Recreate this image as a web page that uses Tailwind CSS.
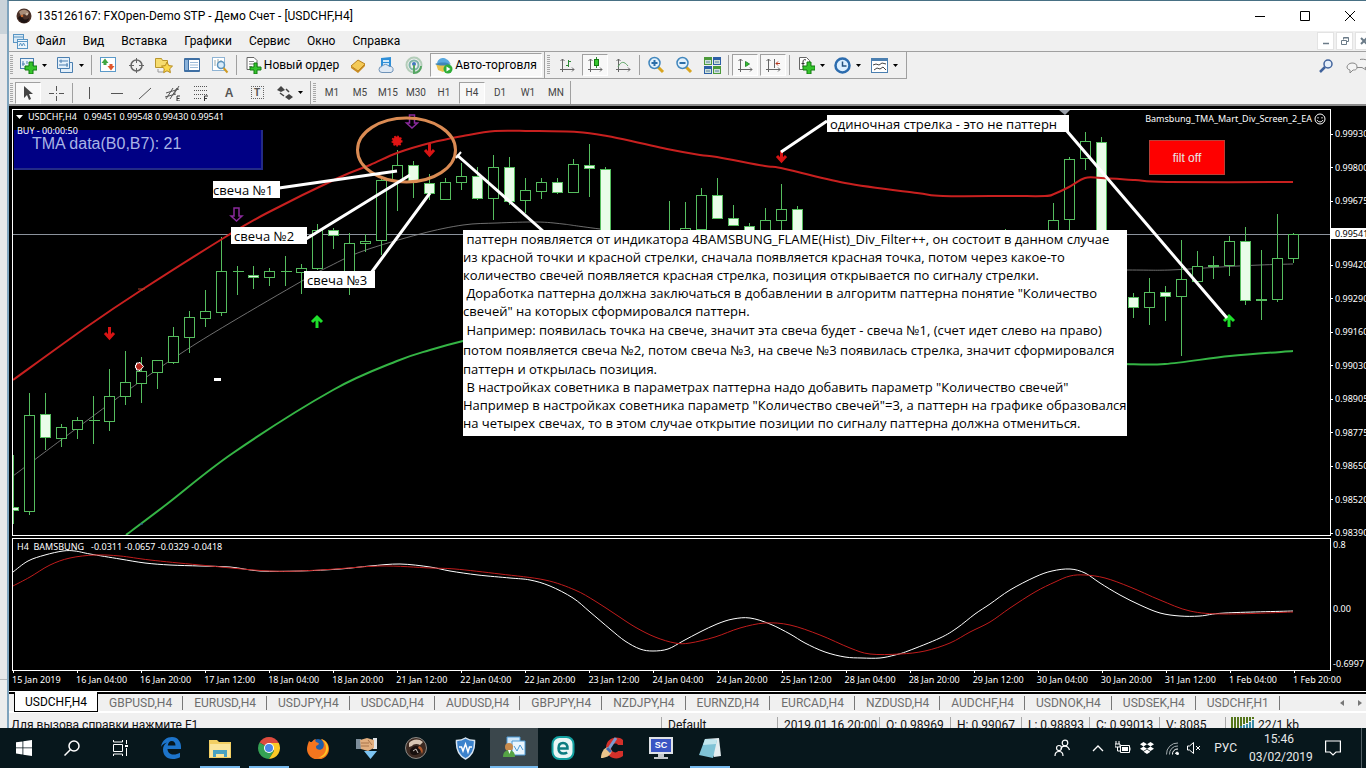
<!DOCTYPE html>
<html lang="ru">
<head>
    <meta charset="UTF-8">
    <meta name="viewport" content="width=device-width, initial-scale=1.0">
    <title>135126167: FXOpen-Demo STP - Демо Счет - [USDCHF,H4]</title>
    <script src="https://cdn.jsdelivr.net/npm/@tailwindcss/browser@4"></script>
</head>
<body class="h-screen flex flex-col overflow-hidden bg-[#e4e6e9] font-['Roboto','Noto_Sans',sans-serif] text-xs text-black">

    <div class="flex flex-1 min-h-0">
        <!-- Edge of the window behind -->
        <div class="w-[7px] flex flex-col">
            <div class="h-[34px] bg-[#c9d3da]"></div>
            <div class="flex-1 border-b border-[#b5b8bb] bg-[#e6e7e9]"></div>
            <div class="h-[48px] bg-[#eceded]"></div>
        </div>

        <div class="flex-1 min-w-0 -mr-[6px] flex flex-col bg-[#f0f0f0] border-t border-t-[#487084] border-l-2 border-l-[#7ea3bd]">

            <!-- Title bar -->
            <header class="h-[30px] bg-white flex items-center pl-[7px]">
                <svg class="size-4" viewBox="0 0 16 16">
                    <circle cx="8" cy="8" r="7.5" fill="#4a3128"/>
                    <path d="M3 4c3-3 8-3 10 1l-2 3-3-2-3 2z" fill="#a88d78"/>
                    <path d="M2 10c2-3 4-2 5 0s3 2 6 0c0 3-3 5-5 5s-5-2-6-5z" fill="#1d1413"/>
                    <circle cx="6" cy="8" r="1.3" fill="#c86a31"/><circle cx="11" cy="6" r="1" fill="#d9c9b8"/>
                </svg>
                <h1 class="ml-[5px] text-xs">135126167: FXOpen-Demo STP - Демо Счет - [USDCHF,H4]</h1>
                <div class="ml-auto flex h-full">
                    <button aria-label="Minimize" class="w-[45px] grid place-items-center"><svg class="size-3" viewBox="0 0 12 12"><path d="M1 6.5h10" stroke="#000"/></svg></button>
                    <button aria-label="Maximize" class="w-[45px] grid place-items-center"><svg class="size-3" viewBox="0 0 12 12"><path d="M1.500 1.500h9v9h-9z" fill="none" stroke="#000"/></svg></button>
                    <button aria-label="Close" class="w-[45px] grid place-items-center"><svg class="size-3" viewBox="0 0 12 12"><path d="M1 1l10 10M11 1L1 11" stroke="#000"/></svg></button>
                </div>
            </header>

            <!-- Menu -->
            <nav class="h-[21px] border-b border-[#a0a0a0] flex items-center pl-1">
                <svg class="size-[15px]" viewBox="0 0 15 15" fill="none" stroke="#5b96c4">
                    <rect x=".5" y=".5" width="10" height="8" fill="#dcebf6"/><path d="M.5 3h10"/>
                    <rect x="4.500" y="5.500" width="10" height="9" fill="#eef6fc"/><path d="M4.500 7.500h10M6 12l1.500-3 1.500 3 1.500-3 1.500 3"/>
                </svg>
                <div class="ml-2 flex gap-[17px]">
                    <a href="#">Файл</a>
                    <a href="#">Вид</a>
                    <a href="#">Вставка</a>
                    <a href="#">Графики</a>
                    <a href="#">Сервис</a>
                    <a href="#">Окно</a>
                    <a href="#">Справка</a>
                </div>
                <div class="ml-auto flex gap-[2px]">
                    <button aria-label="Minimize chart" class="w-[17px] h-[18px] bg-white border border-[#e3e3e3] grid place-items-center"><svg class="size-2" viewBox="0 0 8 8"><path d="M1 6.500h6" stroke="#6b7b88" stroke-width="1.500"/></svg></button>
                    <button aria-label="Restore chart" class="w-[17px] h-[18px] bg-white border border-[#e3e3e3] grid place-items-center"><svg class="size-2" viewBox="0 0 8 8" fill="none" stroke="#6b7b88"><path d="M2.500 2.500v-2h5v4h-2M.5 3.500h5v4h-5zM2.500 1h5"/></svg></button>
                    <button aria-label="Close chart" class="w-[17px] h-[18px] bg-white border border-[#e3e3e3] grid place-items-center"><svg class="size-2" viewBox="0 0 8 8"><path d="M1 1l6 6M7 1L1 7" stroke="#6b7b88" stroke-width="2"/></svg></button>
                </div>
            </nav>

            <!-- Standard toolbar -->
            <div class="h-[27px] flex items-center pl-px">
                <div class="w-[897px] h-full flex items-center border-b border-r border-[#a0a0a0]">
                    <div class="w-[3px] h-5 mr-px bg-[repeating-linear-gradient(#a8a8a8_0_1px,transparent_1px_2px)]"></div>
                    <button aria-label="New chart" class="w-[37px] h-6 flex items-center justify-center gap-[5px]">
                        <svg class="size-[18px]" viewBox="0 0 18 18"><rect x="1.500" y="2.500" width="13" height="10" fill="#eaf3fb" stroke="#4b7fb0"/><path d="M4 5v5M3 8h3M8 5v3" stroke="#4b7fb0"/><path d="M10 6h4v4h4v4h-4v4h-4v-4H6v-4h4z" fill="#35c42c" stroke="#137a10"/></svg>
                        <svg class="w-[5px] h-[3px]" viewBox="0 0 5 3"><path d="M0 0h5L2.500 3z"/></svg>
                    </button>
                    <button aria-label="Profiles" class="w-[38px] h-6 flex items-center justify-center gap-[5px]">
                        <svg class="size-[18px]" viewBox="0 0 18 18" fill="#e4f0fa" stroke="#4b7fb0"><path d="M4.500 6.500h12v10h-12z"/><path d="M1.500 1.500h12v11h-12zM3 5h9M3 9h9M5 3.500V7M11 7v4"/></svg>
                        <svg class="w-[5px] h-[3px]" viewBox="0 0 5 3"><path d="M0 0h5L2.500 3z"/></svg>
                    </button>
                    <div class="w-px h-5 bg-[#a0a0a0] mx-[2px]"></div>
                    <button aria-label="Market watch" class="w-7 grid place-items-center"><svg class="size-[18px]" viewBox="0 0 18 18"><rect x="1.500" y="1.500" width="15" height="14" fill="#fff" stroke="#5b9ac9"/><path d="M6 2.500l3.500 4.500H7.500v2h-3V7H2.500z" fill="#3fa743"/><path d="M12 14.500L8.500 10h2V8h3v2h2z" fill="#e0572c"/></svg></button>
                    <button aria-label="Data window" class="w-7 grid place-items-center"><svg class="size-[17px]" viewBox="0 0 17 17" fill="none" stroke="#666"><circle cx="8.500" cy="8.500" r="5.500" stroke-width="1.500"/><path d="M8.500 1v5M8.500 11v5M1 8.500h5M11 8.500h5"/></svg></button>
                    <button aria-label="Navigator" class="w-7 grid place-items-center"><svg class="size-[18px]" viewBox="0 0 18 18"><path d="M.5 2.500h6l1 2h5v7H.5z" fill="#f6dc6e" stroke="#b9962c"/><path d="M3 13v3h5" fill="none" stroke="#999"/><path d="M12 6l1.700 3.600 3.800.5-2.800 2.700.7 3.900L12 14.800l-3.400 1.900.7-3.900-2.800-2.700 3.800-.5z" fill="#fbd84b" stroke="#b58a1e"/></svg></button>
                    <button aria-label="Terminal" class="w-7 grid place-items-center"><svg class="size-[18px]" viewBox="0 0 18 18"><rect x="1" y="2" width="16" height="14" rx="1" fill="#3f6fa3"/><path d="M6 4h10v10H6z" fill="#fff"/><path d="M2 4h3v10H2z" fill="#8bb2d9"/><path d="M7 6.500h8M7 9h8M7 11.500h8" stroke="#9dbbd8"/></svg></button>
                    <button aria-label="Strategy tester" class="w-7 grid place-items-center"><svg class="size-[18px]" viewBox="0 0 18 18"><rect x="1.500" y="1.500" width="12" height="13" fill="#fff" stroke="#8fb4d4"/><path d="M4 4v6M7 3v7M10 4v5" stroke="#9aa"/><circle cx="10" cy="9" r="3.500" fill="#d9ecfa" stroke="#5b93bd" stroke-width="1.500"/><path d="M12.500 12l4 4.500" stroke="#cf9a22" stroke-width="2"/></svg></button>
                    <div class="w-px h-5 bg-[#a0a0a0] mx-[2px]"></div>
                    <button class="w-[105px] h-6 flex items-center justify-center gap-[2px] whitespace-nowrap text-xs">
                        <svg class="size-[18px]" viewBox="0 0 18 18"><path d="M3 1.500h7l3 3v9H3z" fill="#fff" stroke="#666"/><path d="M5 5.500h5M5 8h5M5 10.500h3" stroke="#888"/><path d="M10 7h3v4h4v3h-4v4h-3v-4H6v-3h4z" fill="#35c42c" stroke="#137a10"/></svg>
                        Новый ордер
                    </button>
                    <button aria-label="MetaEditor" class="w-7 grid place-items-center"><svg class="size-[18px]" viewBox="0 0 18 18"><path d="M2 10l7-6 7 4-7 7z" fill="#f4ca57" stroke="#b6801d"/><path d="M2 10v2l7 5v-2zM9 17l7-7V8l-7 7z" fill="#c98c22"/></svg></button>
                    <button aria-label="VPS" class="w-7 grid place-items-center"><svg class="size-[18px]" viewBox="0 0 18 18"><path d="M4 2l10-1v9H4z" fill="#2f8fd8"/><path d="M6 4h6v2H6zM6 7h6v2H6z" fill="#cfe8fa"/><path d="M5 16.500a3 3 0 010-6 4 4 0 017 0 3 3 0 012 6z" fill="#dfe9f4" stroke="#6f93b8"/></svg></button>
                    <button aria-label="Signals" class="w-7 grid place-items-center"><svg class="size-[18px]" viewBox="0 0 18 18" fill="none"><circle cx="9" cy="9" r="7.500" stroke="#b3cdb9" stroke-width="2"/><circle cx="9" cy="9" r="4.500" stroke="#7fb5a9" stroke-width="2"/><circle cx="9" cy="8" r="2" fill="#4178c0"/><path d="M9 9v8c4 0 7-3 7-7" stroke="#55a663" stroke-width="2"/></svg></button>
                    <button class="ml-[2px] w-[112px] h-6 flex items-center justify-center gap-[2px] whitespace-nowrap text-xs bg-[#f8f8f8] border border-t-[#a0a0a0] border-l-[#a0a0a0] border-b-white border-r-white">
                        <svg class="size-[18px]" viewBox="0 0 18 18"><path d="M2 7c1-4 4-5 6-5s6 2 7 5z" fill="#5aa9df"/><path d="M1 8h14l-2 5-5 3-5-2z" fill="#e8c14c"/><path d="M0 8c4-2 12-2 16 0-4 2-12 2-16 0z" fill="#3f86b8"/><circle cx="13" cy="13" r="4.500" fill="#2fae38"/><path d="M11.500 10.500v5l4-2.500z" fill="#fff"/></svg>
                        Авто-торговля
                    </button>
                    <div class="w-px h-full bg-[#a0a0a0] mx-[2px]"></div>
                    <div class="w-[3px] h-5 mr-[3px] bg-[repeating-linear-gradient(#a8a8a8_0_1px,transparent_1px_2px)]"></div>
                    <button aria-label="Bar chart" class="w-7 grid place-items-center"><svg class="size-4" viewBox="0 0 16 16" fill="none" stroke="#666"><path d="M3.500 2v13M1 12.500h14M1.500 4l2-2 2 2M13 10.500l2 2-2 2"/><path d="M9.500 3v7M7 8.500h2.500M9.500 4.500H12" stroke="#2d8a35"/></svg></button>
                    <button aria-label="Candlesticks" class="w-[26px] h-[22px] mx-px grid place-items-center bg-[#f8f8f8] border border-t-[#a0a0a0] border-l-[#a0a0a0] border-b-white border-r-white"><svg class="size-4" viewBox="0 0 16 16" fill="none" stroke="#666"><path d="M3.500 2v13M1 12.500h14M1.500 4l2-2 2 2M13 10.500l2 2-2 2"/><path d="M9.500 0v11" stroke="#2d8a35"/><rect x="7.500" y="2.500" width="4" height="6" fill="#35c42c" stroke="#137a10"/></svg></button>
                    <button aria-label="Line chart" class="w-7 grid place-items-center"><svg class="size-4" viewBox="0 0 16 16" fill="none" stroke="#666"><path d="M3.500 2v13M1 12.500h14M1.500 4l2-2 2 2M13 10.500l2 2-2 2"/><path d="M3 10c3-6 6-6 10-1" stroke="#5ea565"/></svg></button>
                    <div class="w-px h-5 bg-[#a0a0a0] mx-[2px]"></div>
                    <button aria-label="Zoom in" class="w-7 grid place-items-center"><svg class="size-[18px]" viewBox="0 0 18 18"><path d="M11 11l5 5" stroke="#d9a520" stroke-width="3"/><circle cx="7.500" cy="7" r="5.500" fill="#e2f1fc" stroke="#4287bd" stroke-width="1.500"/><path d="M7.500 4v6M4.500 7h6" stroke="#2b6ea8" stroke-width="2"/></svg></button>
                    <button aria-label="Zoom out" class="w-7 grid place-items-center"><svg class="size-[18px]" viewBox="0 0 18 18"><path d="M11 11l5 5" stroke="#d9a520" stroke-width="3"/><circle cx="7.500" cy="7" r="5.500" fill="#e2f1fc" stroke="#4287bd" stroke-width="1.500"/><path d="M4.500 7h6" stroke="#2b6ea8" stroke-width="2"/></svg></button>
                    <button aria-label="Tile windows" class="w-7 grid place-items-center"><svg class="size-[17px]" viewBox="0 0 17 17"><path d="M0 0h8v8H0zM9 9h8v8H9z" fill="#4c9a3b"/><path d="M9 0h8v8H9zM0 9h8v8H0z" fill="#2d5fa6"/><path d="M1 3h6v4H1zM10 3h6v4h-6zM1 12h6v4H1zM10 12h6v4h-6z" fill="#cfe2d9"/><path d="M2 5h4M11 5h4M2 14h4M11 14h4" stroke="#5d7f9e"/></svg></button>
                    <div class="w-px h-5 bg-[#a0a0a0] mx-[2px]"></div>
                    <button aria-label="Auto scroll" class="w-[26px] h-[22px] mx-px grid place-items-center bg-[#f8f8f8] border border-t-[#a0a0a0] border-l-[#a0a0a0] border-b-white border-r-white"><svg class="size-4" viewBox="0 0 16 16" fill="none" stroke="#666"><path d="M3.500 2v13M1 12.500h14M1.500 4l2-2 2 2M13 10.500l2 2-2 2"/><path d="M8.500 4.500v5l4-2.500z" fill="#35c42c" stroke="#2d8a35"/></svg></button>
                    <button aria-label="Chart shift" class="w-[26px] h-[22px] mx-px grid place-items-center bg-[#f8f8f8] border border-t-[#a0a0a0] border-l-[#a0a0a0] border-b-white border-r-white"><svg class="size-4" viewBox="0 0 16 16" fill="none" stroke="#666"><path d="M3.500 2v13M1 12.500h14M1.500 4l2-2 2 2M13 10.500l2 2-2 2M9.500 2v9"/><path d="M15 6.500h-4M13 4.500l-2 2 2 2" stroke="#b5371d"/></svg></button>
                    <div class="w-px h-5 bg-[#a0a0a0] mx-[2px]"></div>
                    <button aria-label="Indicators" class="w-[37px] h-6 flex items-center justify-center gap-[5px]">
                        <svg class="size-[18px]" viewBox="0 0 18 18"><path d="M2.500 1.500h7l3 3v9h-10z" fill="#fff" stroke="#666"/><path d="M9 4c-2-1-3 0-3 2v5M4.500 7.500h3" fill="none" stroke="#333"/><path d="M10 6h4v4h4v4h-4v4h-4v-4H6v-4h4z" fill="#35c42c" stroke="#137a10"/></svg>
                        <svg class="w-[5px] h-[3px]" viewBox="0 0 5 3"><path d="M0 0h5L2.500 3z"/></svg>
                    </button>
                    <button aria-label="Periods" class="w-[37px] h-6 flex items-center justify-center gap-[5px]">
                        <svg class="size-[17px]" viewBox="0 0 17 17"><circle cx="8.500" cy="8.500" r="7" fill="#dcefff" stroke="#2c6cae" stroke-width="2.500"/><path d="M8.500 4.500v4.500h4" fill="none" stroke="#23527f" stroke-width="1.500"/></svg>
                        <svg class="w-[5px] h-[3px]" viewBox="0 0 5 3"><path d="M0 0h5L2.500 3z"/></svg>
                    </button>
                    <button aria-label="Templates" class="w-[37px] h-6 flex items-center justify-center gap-[5px]">
                        <svg class="size-[17px]" viewBox="0 0 17 17" fill="none"><rect x=".5" y="1.500" width="16" height="14" fill="#fff" stroke="#4b7fb0"/><path d="M1 3h15" stroke="#4b7fb0" stroke-width="2"/><path d="M2 8l3-1 3 1 3-2 4 1M3 13l3-2 3 1 3-2 3 3" stroke="#444"/></svg>
                        <svg class="w-[5px] h-[3px]" viewBox="0 0 5 3"><path d="M0 0h5L2.500 3z"/></svg>
                    </button>
                </div>
                <div class="ml-auto flex items-center gap-[13px]">
                    <button aria-label="Search"><svg class="size-[14px]" viewBox="0 0 14 14"><circle cx="9" cy="5" r="4" fill="#e6effa" stroke="#41639c" stroke-width="1.500"/><path d="M6 8l-5 5" stroke="#41639c" stroke-width="2.500"/></svg></button>
                    <button aria-label="Chat"><svg class="w-[26px] h-4" viewBox="0 0 26 16" fill="#f4f4f4" stroke="#888"><path d="M14 1.500c5-1 9 1 9 4s-2 4-4 4l2 3-5-3h-5"/><path d="M6 5c3 0 5 1 5 4s-2 3-4 3l-3 3v-3c-2-.5-3-1.500-3-3s2-4 5-4z"/></svg></button>
                </div>
            </div>

            <!-- Line studies and timeframes -->
            <div class="h-[27px] pt-[2px] flex items-center pl-px border-b-2 border-[#8a8a8a] text-[10px] text-[#444]">
                <div class="w-[3px] h-5 mr-px bg-[repeating-linear-gradient(#a8a8a8_0_1px,transparent_1px_2px)]"></div>
                <button aria-label="Cursor" class="w-[26px] h-[22px] mx-px grid place-items-center bg-[#f8f8f8] border border-t-[#a0a0a0] border-l-[#a0a0a0] border-b-white border-r-white"><svg class="size-4" viewBox="0 0 16 16"><path d="M4 1v12l3-3 2 5 2-1-2-5h4z" fill="#444"/></svg></button>
                <button aria-label="Crosshair" class="w-7 grid place-items-center"><svg class="size-4" viewBox="0 0 16 16" stroke="#555"><path d="M8.500 1v5M8.500 11v5M1 8.500h5M11 8.500h5M8 8.500h1"/></svg></button>
                <div class="w-px h-5 bg-[#a0a0a0] mx-[2px]"></div>
                <button aria-label="Vertical line" class="w-7 grid place-items-center"><svg class="size-4" viewBox="0 0 16 16" stroke="#555"><path d="M8.500 2v12"/></svg></button>
                <button aria-label="Horizontal line" class="w-7 grid place-items-center"><svg class="size-4" viewBox="0 0 16 16" stroke="#555"><path d="M2 8.500h12"/></svg></button>
                <button aria-label="Trendline" class="w-7 grid place-items-center"><svg class="size-4" viewBox="0 0 16 16" stroke="#555"><path d="M2 14L14 3"/></svg></button>
                <button aria-label="Equidistant channel" class="w-7 grid place-items-center"><svg class="size-4" viewBox="0 0 16 16"><path d="M1 14L8 3M5 14l7-11M9 9l5-8M1 8l13-4M0 12l11-3" stroke="#555" fill="none"/><path d="M15 11h-3v5h3M12 13.500h2.500" stroke="#333" fill="none"/></svg></button>
                <button aria-label="Fibonacci" class="w-7 grid place-items-center"><svg class="size-4" viewBox="0 0 16 16" fill="none" stroke="#555"><path d="M1 1.500h13M1 5.500h13M1 9.500h13M1 13.500h8" stroke-dasharray="1 1"/><path d="M11.500 16v-5H15M11.500 13.500H14" stroke="#333"/></svg></button>
                <button class="w-7 text-center font-bold text-xs text-[#555] font-['Liberation_Sans',sans-serif]">A</button>
                <button class="w-7 grid place-items-center" aria-label="Text label"><span class="size-[13px] border border-dotted border-[#666] grid place-items-center font-bold text-[#555] leading-none">T</span></button>
                <button aria-label="Arrows" class="w-[37px] h-6 flex items-center justify-center gap-[5px]">
                    <svg class="size-4" viewBox="0 0 16 16" fill="#444"><path d="M4 1l4 4-4 2-4-2zM12 15l-4-3 4-3 4 3z"/><path d="M3 8l4 3M9 4l3 3" stroke="#444" stroke-width="1.500"/></svg>
                    <svg class="w-[5px] h-[3px]" viewBox="0 0 5 3"><path d="M0 0h5L2.500 3z"/></svg>
                </button>
                <div class="w-px h-full bg-[#a0a0a0] mx-[2px]"></div>
                <div class="w-[3px] h-5 mr-[2px] bg-[repeating-linear-gradient(#a8a8a8_0_1px,transparent_1px_2px)]"></div>
                <button class="w-7">M1</button>
                <button class="w-7">M5</button>
                <button class="w-7">M15</button>
                <button class="w-7">M30</button>
                <button class="w-7">H1</button>
                <button class="w-[26px] h-[22px] mx-px bg-[#f8f8f8] border border-t-[#a0a0a0] border-l-[#a0a0a0] border-b-white border-r-white">H4</button>
                <button class="w-7">D1</button>
                <button class="w-7">W1</button>
                <button class="w-7">MN</button>
                <div class="w-px h-full bg-[#a0a0a0]"></div>
            </div>

            <!-- Charts -->
            <main class="flex-1 min-h-0 flex flex-col bg-black text-white pl-[3px] pt-[3px] text-[9px] font-['Noto_Sans',sans-serif]">
                <div class="flex-1 min-h-0 flex">
                    <section class="relative flex-1 min-w-0 border border-white">
                        <svg id="priceChart" class="block w-full h-full" viewBox="13 110 1317 425" preserveAspectRatio="none">
                            <path d="M13 234.500H1330" stroke="#8b929c"/>
                            <path id="midBand" fill="none" stroke="#8a8a8a" stroke-width=".8"/>
                            <g id="candles" stroke="#55bd5e" shape-rendering="crispEdges"></g>
                            <path id="upperBand" fill="none" stroke="#c8201f" stroke-width="2"/>
                            <path id="lowerBandLeft" fill="none" stroke="#35b545" stroke-width="2"/>
                            <path id="lowerBandRight" fill="none" stroke="#35b545" stroke-width="2"/>
                            <path d="M1059 110h11l-5 5z" fill="#9a9fa8"/>
                            <path d="M138 289h7M142 289v2" stroke="#b3402a"/>
                            <path d="M140 524h3" stroke="#2a4fb0"/>
                            <!-- signals -->
                            <circle cx="397" cy="141" r="4.500" fill="#e01414"/>
                            <circle cx="397" cy="141" r="4.500" fill="none" stroke="#e01414" stroke-width="2" stroke-dasharray="1.500 1.500"/>
                            <g fill="none" stroke="#d81414" stroke-width="3">
                                <path d="M109.500 327v11M105 333l4.500 5 4.500-5"/>
                                <path d="M429.500 144v11M425 150l4.500 5 4.500-5"/>
                                <path d="M781.500 151v10M777 156l4.500 5 4.500-5"/>
                            </g>
                            <g fill="none" stroke="#1fe02c" stroke-width="3">
                                <path d="M317 328v-11M312 322l5-5 5 5"/>
                                <path d="M1229 327v-11M1224 321l5-5 5 5"/>
                            </g>
                            <g fill="none" stroke="#8a2a9c" stroke-width="1.500">
                                <path d="M234 208h5v8h3l-5.500 5-5.500-5h3z"/>
                                <path d="M409.500 115h5v8h3l-5.500 5-5.500-5h3z"/>
                            </g>
                            <path d="M136.500 363h3v-1l4 4.500-4 4.500v-1h-3v-2h-1v-3h1z" fill="#b3251a" stroke="#fff"/>
                            <path d="M214 378h7v3h-7z" fill="#fff"/>
                            <!-- notes drawn over the chart -->
                            <ellipse cx="406.500" cy="150" rx="49" ry="32" fill="none" stroke="#da8b53" stroke-width="3"/>
                            <g stroke="#fff" stroke-width="3">
                                <path d="M279 188l118-17M306 239l104-64M371 273l59-80M457 155l86 76M781 152l46-31M1066 130l161 188"/>
                                <path d="M456 158l5-6" stroke-width="2"/>
                            </g>
                        </svg>

                        <h2 class="absolute left-0 top-0 pl-[3px] pt-px flex items-center gap-[5px] leading-3 whitespace-pre"><svg class="w-[7px] h-1" viewBox="0 0 7 4"><path d="M0 0h7L3.500 4z" fill="#fff"/></svg><span>USDCHF,H4   0.99451 0.99548 0.99430 0.99541</span></h2>
                        <div class="absolute left-px top-5 w-[249px] h-10 bg-[#000084] border-r-2 border-b-2 border-[#232a86] pl-[18px] text-base leading-7 text-[#a9b4e6] font-['Liberation_Sans',sans-serif]">TMA data(B0,B7): 21</div>
                        <p class="absolute left-1 top-[15px] leading-3">BUY - 00:00:50</p>
                        <p class="absolute right-1 top-[2px] flex items-center gap-[2px] leading-[14px]">Bamsbung_TMA_Mart_Div_Screen_2_EA
                            <svg class="size-3" viewBox="0 0 12 12" fill="none" stroke="#fff"><circle cx="6" cy="6" r="5"/><path d="M4 4v1.500M8 4v1.500M3 7c1.500 2.500 4.500 2.500 6 0"/></svg>
                        </p>
                        <button class="absolute right-[105px] top-[30px] w-[76px] h-[35px] bg-[#fe0000] border border-[#b84038] text-[#e8e8e8] text-xs font-['Liberation_Sans',sans-serif]">filt off</button>

                        <div class="font-['Open_Sans',sans-serif] text-black text-[13px] leading-[18px]">
                            <p class="absolute left-[200px] top-[71px] w-[67px] h-[17px] bg-white">свеча №1</p>
                            <p class="absolute left-[218px] top-[117px] w-[76px] h-[17px] bg-white pl-[3px]">свеча №2</p>
                            <p class="absolute left-[291px] top-[161px] w-[71px] h-[17px] bg-white pl-[3px]">свеча №3</p>
                            <p class="absolute left-[814px] top-[5px] w-[242px] h-[17px] bg-white pl-[3px]">одиночная стрелка - это не паттерн</p>
                            <div class="absolute left-[450px] top-[120px] w-[664px] h-[206px] bg-white *:whitespace-pre">
                                <p> паттерн появляется от индикатора 4BAMSBUNG_FLAME(Hist)_Div_Filter++, он состоит в данном случае</p>
                                <p>из красной точки и красной стрелки, сначала появляется красная точка, потом через какое-то</p>
                                <p>количество свечей появляется красная стрелка, позиция открывается по сигналу стрелки.</p>
                                <p> Доработка паттерна должна заключаться в добавлении в алгоритм паттерна понятие "Количество</p>
                                <p>свечей" на которых сформировался паттерн.</p>
                                <p class="leading-5"> Например: появилась точка на свече, значит эта свеча будет - свеча №1, (счет идет слево на право)</p>
                                <p class="leading-5">потом появляется свеча №2, потом свеча №3, на свече №3 появилась стрелка, значит сформировался</p>
                                <p>паттерн и открылась позиция.</p>
                                <p> В настройках советника в параметрах паттерна надо добавить параметр "Количество свечей"</p>
                                <p>Например в настройках советника параметр "Количество свечей"=3, а паттерн на графике образовался</p>
                                <p>на четырех свечах, то в этом случае открытие позиции по сигналу паттерна должна отмениться.</p>
                            </div>
                        </div>
                    </section>
                    <ul class="w-[41px] pt-[18px] -mb-1 flex flex-col justify-between leading-[14px]">
                        <li class="flex items-center gap-[2px]"><span class="w-[2px] h-px bg-white"></span>0.99930</li>
                        <li class="flex items-center gap-[2px]"><span class="w-[2px] h-px bg-white"></span>0.99800</li>
                        <li class="flex items-center gap-[2px]"><span class="w-[2px] h-px bg-white"></span>0.99675</li>
                        <li class="h-[11px] leading-[11px] bg-white text-black pl-1">0.99541</li>
                        <li class="flex items-center gap-[2px]"><span class="w-[2px] h-px bg-white"></span>0.99420</li>
                        <li class="flex items-center gap-[2px]"><span class="w-[2px] h-px bg-white"></span>0.99290</li>
                        <li class="flex items-center gap-[2px]"><span class="w-[2px] h-px bg-white"></span>0.99160</li>
                        <li class="flex items-center gap-[2px]"><span class="w-[2px] h-px bg-white"></span>0.99030</li>
                        <li class="flex items-center gap-[2px]"><span class="w-[2px] h-px bg-white"></span>0.98905</li>
                        <li class="flex items-center gap-[2px]"><span class="w-[2px] h-px bg-white"></span>0.98775</li>
                        <li class="flex items-center gap-[2px]"><span class="w-[2px] h-px bg-white"></span>0.98650</li>
                        <li class="flex items-center gap-[2px]"><span class="w-[2px] h-px bg-white"></span>0.98520</li>
                        <li class="flex items-center gap-[2px]"><span class="w-[2px] h-px bg-white"></span>0.98390</li>
                    </ul>
                </div>

                <div class="h-[133px] mt-[2px] flex">
                    <section class="relative flex-1 min-w-0 border border-white">
                        <svg class="block w-full h-full" viewBox="13 539 1317 131" preserveAspectRatio="none" fill="none">
                            <path id="macdLine" stroke="#fff"/>
                            <path id="signalLine" stroke="#c01c1c"/>
                        </svg>
                        <h2 class="absolute left-1 top-[2px] leading-3 whitespace-pre">H4  BAMSBUNG   -0.0311 -0.0657 -0.0329 -0.0418</h2>
                    </section>
                    <ul class="w-[41px] pl-[2px] flex flex-col justify-between leading-[14px]">
                        <li>0.8</li>
                        <li class="pt-2">0.00</li>
                        <li>-0.6997</li>
                    </ul>
                </div>

                <ul id="timeAxis" class="h-5 mr-[15px] grid grid-cols-21 leading-[14px] whitespace-nowrap"></ul>
            </main>

            <!-- Chart tabs -->
            <nav class="h-[22px] border-t border-white bg-[#f0f0f0] flex text-[#6d6d6d] leading-5">
                <div class="flex-1 flex border-t-2 border-black border-b-2 border-b-white pl-[5px]">
                    <a href="#" class="-mt-[2px] h-5 px-[10px] bg-white border border-t-0 border-black text-black">USDCHF,H4</a>
                    <div id="chartTabs" class="flex items-center"></div>
                    <div class="ml-auto mr-[10px] flex items-center gap-[14px]">
                        <button aria-label="Previous tabs"><svg class="w-1 h-[6px]" viewBox="0 0 4 6"><path d="M4 0v6L0 3z" fill="#777"/></svg></button>
                        <button aria-label="Next tabs"><svg class="w-1 h-[6px]" viewBox="0 0 4 6"><path d="M0 0v6l4-3z" fill="#777"/></svg></button>
                    </div>
                </div>
            </nav>

            <!-- Status bar, partly behind the taskbar -->
            <footer class="h-[15px] overflow-hidden flex text-xs leading-4 pt-1 whitespace-nowrap text-[#111]">
                <span class="flex-1 pl-[2px]">Для вызова справки нажмите F1</span>
                <span class="w-[116px] pl-[6px] border-l border-[#a8a8a8]">Default</span>
                <span class="w-[102px] pl-[6px] border-l border-[#a8a8a8]">2019.01.16 20:00</span>
                <span class="w-[71px] pl-[6px] border-l border-[#a8a8a8]">O: 0.98969</span>
                <span class="w-[71px] pl-[6px] border-l border-[#a8a8a8]">H: 0.99067</span>
                <span class="w-[68px] pl-[6px] border-l border-[#a8a8a8]">L: 0.98893</span>
                <span class="w-[70px] pl-[6px] border-l border-[#a8a8a8]">C: 0.99013</span>
                <span class="w-[66px] pl-[6px] border-l border-[#a8a8a8]">V: 8085</span>
                <span class="w-[147px] pl-[5px] border-l border-[#a8a8a8] flex gap-1">
                    <svg class="w-[23px] h-3" viewBox="0 0 23 12"><path d="M0 0h2v12H0zM3 0h2v12H3zM6 0h2v12H6zM9 0h2v9H9zM12 0h2v7h-2zM15 0h2v6h-2zM18 0h2v4h-2zM21 0h2v2h-2z" fill="#55761c"/><path d="M9 9h2v3H9zM12 8h2v4h-2zM15 7h2v5h-2zM18 5h2v7h-2zM21 3h2v9h-2z" fill="#3a8ca8"/></svg>
                    22/1 kb
                </span>
            </footer>
        </div>
    </div>

    <!-- Taskbar -->
    <footer class="h-10 bg-[#07171c] text-[#e8eaea] flex">
        <button aria-label="Start" class="w-12 grid place-items-center"><svg class="size-4" viewBox="0 0 16 16" fill="#fff"><path d="M0 2.300l6.500-.9v6.100H0zM7.300 1.300L16 0v7.500H7.300zM0 8.300h6.500v6.200L0 13.600zM7.300 8.300H16V16l-8.700-1.300z"/></svg></button>
        <button aria-label="Search Windows" class="w-12 grid place-items-center"><svg class="size-4" viewBox="0 0 16 16" fill="none" stroke="#fff" stroke-width="1.500"><circle cx="10" cy="6" r="5"/><path d="M6.500 9.500L.5 15.500"/></svg></button>
        <button aria-label="Task view" class="w-12 grid place-items-center"><svg class="size-4" viewBox="0 0 16 16" fill="none" stroke="#fff"><path d="M1.500 4.500h9v7h-9zM1.500 0v2h9V0M1.500 16v-2h9v2M14.500 0v4M14.500 8v8"/><path d="M13 5h3v2h-3z" fill="#fff" stroke="none"/></svg></button>
        <div class="flex gap-px ml-[3px]">
            <button aria-label="Edge" class="w-12 grid place-items-center"><svg class="w-5 h-[22px]" viewBox="0 0 20 22"><path d="M0 10C1 3 6 0 11 0c6 0 9 5 9 10v2H6.500c.3 4 3 5.500 6 5.500 2.500 0 4.500-.6 6.500-1.800v4.500c-2 1.200-4.500 1.800-7.500 1.800-6 0-9.500-4-9.500-9.500 0-3 1.500-5.500 4-7C3 6 1 8 0 10zm6.800-1.500h7.700c0-3-1.500-4.500-3.700-4.500-2.300 0-3.600 1.800-4 4.500z" fill="#1d74ca"/></svg></button>
            <button aria-label="Explorer" class="w-12 grid place-items-center bg-[linear-gradient(#76b9ed,#76b9ed)] bg-[length:40px_2px] bg-bottom bg-no-repeat"><svg class="w-[22px] h-[19px]" viewBox="0 0 22 19"><path d="M0 1h8l2 2h12v16H0z" fill="#f2cf63"/><path d="M1 5h20v13H1z" fill="#fbe69c"/><path d="M4 18v-7h14v7h-3v-3H7v3z" fill="#49a3c2"/></svg></button>
            <button aria-label="Chrome" class="w-12 grid place-items-center bg-[linear-gradient(#76b9ed,#76b9ed)] bg-[length:40px_2px] bg-bottom bg-no-repeat"><svg class="size-[22px]" viewBox="0 0 22 22"><path d="M11 11L1.500 5.500A11 11 0 0120.500 5.500z" fill="#dd4b3e"/><path d="M11 11L1.500 5.500A11 11 0 0011 22l5-8z" fill="#35a254"/><path d="M11 6h9.800A11 11 0 0111 22l5-8z" fill="#fbc926"/><path d="M11 6h9.800l-.3-.5H8z" fill="#dd4b3e"/><circle cx="11" cy="11" r="5" fill="#fff"/><circle cx="11" cy="11" r="4" fill="#4a86e8"/></svg></button>
            <button aria-label="Firefox" class="w-12 grid place-items-center"><svg class="size-[22px]" viewBox="0 0 22 22"><circle cx="11" cy="11" r="9" fill="#1f5ea8"/><path d="M2 4c1 1 2 1 3 1 1-2 3-3 4-3-1 1-1 2 0 3 2 1 3 1 3 2s-3 1-3 3c0 3 5 4 7 1 2-4 0-7-2-9 5 1 8 5 8 10a11 10.500 0 01-22 0c0-3 1-5 2-8z" fill="#f4751e"/><path d="M14 2c5 2 8 6 7 11-1 5-5 8-10 8 5-2 8-5 8-10 0-4-2-7-5-9z" fill="#fcc624"/></svg></button>
            <button aria-label="Handshake" class="w-12 grid place-items-center"><svg class="size-[22px]" viewBox="0 0 22 22"><path d="M0 2h5v10H0z" fill="#7d8e9b"/><path d="M17 1h4v11h-4z" fill="#dfe3e6"/><path d="M4 3l7-2 7 2v8l-6 3-7-2z" fill="#e1ae7e"/><path d="M5 6h8M5 9h8M12 3l4 5" stroke="#a8744a"/><path d="M8 14h13l-6.500 8z" fill="#7cc4f2"/></svg></button>
            <button aria-label="FXOpen terminal" class="w-12 grid place-items-center"><svg class="size-[22px]" viewBox="0 0 22 22"><circle cx="11" cy="11" r="10.500" fill="#3c2a22" stroke="#8d8a86"/><path d="M4 6c3-4 10-5 14-1l-3 3c-3-2-7-1-8 1l-3 1z" fill="#d8c6b4"/><path d="M5 13c3-5 8-5 10-2s-1 7-5 7-5-2-5-5z" fill="#170f0d"/><path d="M14 9c3 1 5 4 3 8-1-3-2-5-4-6z" fill="#b35a2c"/><path d="M8 14l3-2 2 4" fill="none" stroke="#cfc8c2"/></svg></button>
            <button aria-label="Shield" class="w-12 grid place-items-center"><svg class="w-[21px] h-[23px]" viewBox="0 0 21 23"><path d="M10.500 1c3 2 6 2.500 9 2.500C20 12 17 19 10.500 22 4 19 1 12 1.500 3.500c3 0 6-.5 9-2.500z" fill="#3b82cc" stroke="#d7e5f2" stroke-width="1.500"/><path d="M4 10h2.500L8 14l2.500-7 2.500 8 1.500-5H17" fill="none" stroke="#fff" stroke-width="1.500"/></svg></button>
            <button aria-label="MetaTrader" class="w-12 grid place-items-center bg-[#3b474c] border-b-2 border-[#76b9ed]"><svg class="w-[23px] h-[22px]" viewBox="0 0 23 22"><path d="M4 1h13v10H4z" fill="#cfe6f8" stroke="#4d9ad4"/><path d="M9 5h13v14H9z" fill="#eaf5fd" stroke="#4d9ad4"/><path d="M11 10l3 5 3-6 3 5" fill="none" stroke="#4d9ad4"/><circle cx="6" cy="11" r="4" fill="#c68a4c"/><path d="M0 21c0-5 3-7 6-7s6 2 6 7z" fill="#55a345"/><path d="M5 14h3l-1.500 4z" fill="#fff"/></svg></button>
            <button aria-label="ESET" class="w-12 grid place-items-center"><svg class="size-6" viewBox="0 0 24 24"><rect x="1.500" y="1" width="21" height="22" rx="7" fill="#e9f6f5" stroke="#12a0a0" stroke-width="2"/><path d="M7.500 12.500h9c0-3.500-1.500-5.500-4.500-5.500s-4.500 2-4.500 5.200c0 3.500 2 5.300 5 5.300 1.500 0 2.800-.4 3.700-1" fill="none" stroke="#0b7c80" stroke-width="2.500"/></svg></button>
            <button aria-label="CCleaner" class="w-12 grid place-items-center"><svg class="w-6 h-[22px]" viewBox="0 0 24 22"><path d="M23 8V3c-6-5-17-2-17 8s11 13 17 8v-5h-5c-2 3-7 1-7-3s5-6 7-3z" fill="#d3302a"/><path d="M16 1l-8 12" stroke="#7a9cd0" stroke-width="3"/><path d="M8 10l4 4c-2 5-6 7-11 7 0-6 3-10 7-11z" fill="#e9c48b"/><path d="M7 11l4 4" stroke="#3d69b3" stroke-width="3"/></svg></button>
            <button aria-label="SC" class="w-12 grid place-items-center"><span class="relative grid place-items-center"><svg class="w-6 h-[22px]" viewBox="0 0 24 22"><path d="M0 0h24v17H0z" fill="#dfe2e6"/><path d="M2 2h20v13H2z" fill="#3a55c4"/><path d="M9 17h6v3h4v2H5v-2h4z" fill="#c3c7cb"/></svg><b class="absolute top-[3px] text-[9px] leading-[11px] text-white font-['Liberation_Sans',sans-serif]">SC</b></span></button>
            <button aria-label="Notepad" class="w-12 grid place-items-center bg-[linear-gradient(#76b9ed,#76b9ed)] bg-[length:40px_2px] bg-bottom bg-no-repeat"><svg class="w-[22px] h-[22px]" viewBox="0 0 22 22"><path d="M6 2l14-1 2 18-7 1z" fill="#e4edf0"/><path d="M6 2l12 1-4 18-14-3z" fill="#7fc3d6"/><path d="M6 2l12 1-1 4L4 8z" fill="#c2e6ee"/></svg></button>
        </div>
        <div class="ml-auto flex items-center">
            <button aria-label="People"><svg class="w-4 h-[18px]" viewBox="0 0 16 18" fill="none" stroke="#fff" stroke-width="1.200"><circle cx="11" cy="4" r="2.800"/><path d="M7 10c1-4 7-4 8.500 1"/><circle cx="5" cy="9" r="2.500"/><path d="M1 17c0-6 8-6 8 0"/></svg></button>
            <button aria-label="Hidden icons" class="ml-[22px]"><svg class="w-3 h-2" viewBox="0 0 12 8"><path d="M1 7l5-5 5 5" fill="none" stroke="#fff" stroke-width="1.300"/></svg></button>
            <button aria-label="Battery" class="ml-[11px]"><svg class="w-4 h-[14px]" viewBox="0 0 16 14"><path d="M5.500 4.500h9v7h-9zM15 6.500v3" fill="none" stroke="#fff"/><path d="M7 6h6v4H7z" fill="#fff"/><path d="M1 0v3M4 0v3M0 3h5v3H0zM2.500 6v4H5" fill="none" stroke="#fff"/></svg></button>
            <button aria-label="Dropbox" class="ml-[9px]"><svg class="w-[14px] h-3" viewBox="0 0 14 12" fill="#fff"><path d="M3.500 0L7 2.200 3.500 4.400 0 2.200zM10.500 0L14 2.200l-3.500 2.200L7 2.200zM3.500 4.600L7 6.800 3.500 9 0 6.800zM10.500 4.600L14 6.800 10.500 9 7 6.800zM7 7.600l3.500 2.200L7 12 3.500 9.800z"/></svg></button>
            <button aria-label="Network" class="ml-3"><svg class="size-[13px]" viewBox="0 0 13 13" fill="none" stroke="#fff"><path d="M9.500 12a2 2 0 012-2M6.500 12.500a5 5 0 015.500-5.500"/><path d="M3.500 12.500a8 8 0 018.500-8.500M.5 12.500A11 11 0 0112 1" stroke="#a5adb0"/><circle cx="11.500" cy="11.500" r="1.500" fill="#fff" stroke="none"/></svg></button>
            <button aria-label="Volume" class="ml-2"><svg class="w-[14px] h-3" viewBox="0 0 14 12" fill="none" stroke="#fff"><path d="M.5 4v4h2l4 3.500V.5L2.500 4zM9 4l4 4M13 4L9 8"/></svg></button>
            <button class="ml-[13px] text-xs">РУС</button>
            <button class="ml-[12px] w-[60px] text-center text-xs leading-[18px]">15:46<br>03/02/2019</button>
            <button aria-label="Notifications" class="ml-4"><svg class="size-4" viewBox="0 0 16 16" fill="none" stroke="#fff" stroke-width="1.200"><path d="M.6 1h14.800v11H11l-3 3-3-3H.6z"/></svg></button>
            <div class="ml-5 w-px h-full bg-[#536066] mr-1"></div>
        </div>
    </footer>

    <script>
        const SVG_NS = 'http://www.w3.org/2000/svg';
        const FIRST_X = 13;
        const BAR_STEP = 16;

        // [bar, high, low, body top, body bottom, filled]
        const candles = [
            [0, 455, 524, 507, 510, 1], [1, 393, 515, 415, 511, 0], [2, 393, 450, 414, 437, 1],
            [3, 424, 447, 427, 438, 0], [4, 417, 439, 420, 429, 0], [5, 396, 444, 420, 420, 0],
            [6, 369, 431, 396, 421, 0], [7, 351, 405, 382, 396, 0], [8, 357, 403, 371, 383, 0],
            [9, 360, 389, 360, 372, 0], [10, 327, 364, 336, 362, 0], [11, 311, 353, 317, 337, 0],
            [12, 290, 327, 311, 318, 0], [13, 237, 316, 271, 312, 0], [14, 266, 295, 271, 271, 0],
            [15, 266, 289, 275, 277, 1], [16, 268, 286, 271, 277, 0], [17, 256, 286, 271, 271, 0],
            [18, 264, 294, 268, 272, 0], [19, 224, 270, 230, 268, 0], [20, 228, 249, 230, 235, 1],
            [21, 233, 295, 243, 273, 0], [22, 234, 252, 241, 243, 0], [23, 178, 255, 180, 240, 0],
            [24, 150, 211, 165, 180, 0], [25, 161, 198, 165, 181, 1], [26, 174, 200, 183, 193, 1],
            [27, 178, 199, 182, 199, 0], [28, 163, 190, 176, 182, 0], [29, 167, 200, 176, 198, 1],
            [30, 155, 220, 167, 198, 0], [31, 157, 205, 167, 201, 1], [32, 178, 213, 190, 200, 0],
            [33, 178, 199, 182, 191, 0], [34, 178, 194, 182, 192, 1], [35, 159, 192, 164, 192, 0],
            [36, 144, 197, 165, 168, 1], [37, 167, 260, 169, 250, 1],
            [41, 201, 250, 235, 245, 0], [42, 202, 250, 228, 245, 0], [43, 188, 240, 195, 229, 0],
            [44, 178, 218, 195, 218, 1], [45, 205, 225, 218, 225, 1], [46, 223, 250, 226, 245, 1],
            [47, 208, 250, 220, 245, 0], [48, 184, 250, 209, 220, 0], [49, 206, 250, 209, 245, 1],
            [62, 229, 250, 235, 245, 0], [65, 203, 250, 220, 245, 0], [66, 157, 250, 159, 219, 0],
            [67, 132, 170, 141, 158, 0], [68, 137, 250, 142, 245, 1],
            [70, 293, 318, 297, 307, 1], [71, 278, 325, 292, 307, 0], [72, 286, 321, 292, 296, 1],
            [73, 240, 356, 279, 296, 0], [74, 251, 281, 266, 281, 0], [75, 256, 279, 265, 266, 1],
            [76, 236, 276, 241, 265, 0], [77, 227, 305, 241, 300, 1], [78, 250, 320, 299, 300, 1],
            [79, 214, 302, 258, 299, 0], [80, 233, 263, 234, 258, 0]
        ];

        const candleGroup = document.getElementById('candles');
        function add(name, attrs) {
            const el = document.createElementNS(SVG_NS, name);
            for (const key in attrs) el.setAttribute(key, attrs[key]);
            candleGroup.appendChild(el);
        }
        candles.forEach(([bar, high, low, top, bottom, filled]) => {
            const x = FIRST_X + bar * BAR_STEP + 0.5;
            add('path', { d: `M${x} ${high}V${low}` });
            if (top === bottom) {
                add('path', { d: `M${x - 5} ${top + 0.5}h11` });
            } else {
                add('rect', { x: x - 5, y: top + 0.5, width: 10, height: bottom - top, fill: filled ? '#e9fde9' : '#000' });
            }
        });

        // Smooth curve through the points
        function curve(points) {
            let d = `M${points[0][0]} ${points[0][1]}`;
            for (let i = 0; i < points.length - 1; i++) {
                const p0 = points[i - 1] || points[i], p1 = points[i], p2 = points[i + 1], p3 = points[i + 2] || p2;
                d += `C${p1[0] + (p2[0] - p0[0]) / 6} ${p1[1] + (p2[1] - p0[1]) / 6} ${p2[0] - (p3[0] - p1[0]) / 6} ${p2[1] - (p3[1] - p1[1]) / 6} ${p2[0]} ${p2[1]}`;
            }
            return d;
        }

        const lines = {
            upperBand: [[13, 380], [88, 326], [140, 291], [227, 236], [267, 213], [338, 178], [370, 165], [397, 153], [430, 143], [463, 136], [495, 131], [530, 131], [577, 132], [607, 136], [640, 143], [667, 149], [700, 155], [717, 157], [765, 166], [781, 168], [845, 183], [917, 193], [943, 196], [1010, 196], [1045, 196], [1054, 194], [1069, 187], [1085, 178], [1101, 178], [1135, 180], [1167, 182], [1293, 182]],
            midBand: [[13, 476], [61, 440], [127, 391], [180, 354], [230, 323], [302, 281], [330, 266], [363, 251], [420, 234], [463, 225], [497, 223], [537, 222], [563, 224], [600, 229], [800, 255], [1000, 270], [1123, 270], [1170, 270], [1220, 267], [1260, 265], [1293, 264]],
            lowerBandLeft: [[126, 535], [167, 504], [233, 453], [333, 390], [397, 361], [430, 350], [463, 341], [480, 338]],
            lowerBandRight: [[1100, 364], [1123, 364], [1165, 364], [1230, 356], [1293, 351]],
            macdLine: [[13, 572], [28, 561], [45, 555], [63, 551], [75, 551], [90, 554], [120, 559], [145, 563], [170, 565], [200, 566], [230, 567], [260, 571], [300, 571], [340, 569], [370, 566], [400, 564], [430, 567], [450, 571], [478, 575], [510, 578], [530, 580], [550, 586], [573, 598], [590, 612], [610, 629], [625, 641], [640, 649], [653, 651], [668, 649], [683, 641], [700, 632], [717, 624], [733, 619], [750, 618], [770, 624], [790, 634], [805, 643], [825, 652], [845, 657], [862, 658], [880, 658], [895, 655], [908, 651], [940, 638], [957, 628], [975, 614], [990, 604], [1010, 590], [1035, 577], [1052, 571], [1070, 569], [1085, 573], [1100, 583], [1120, 595], [1140, 605], [1160, 613], [1180, 616], [1200, 616], [1225, 613], [1293, 611]],
            signalLine: [[13, 586], [30, 577], [50, 565], [70, 558], [95, 555], [120, 556], [150, 560], [200, 565], [270, 571], [320, 570], [380, 566], [430, 568], [455, 569], [500, 574], [545, 580], [575, 590], [595, 601], [615, 614], [635, 627], [655, 637], [675, 643], [690, 643], [715, 637], [740, 628], [765, 623], [790, 625], [820, 635], [850, 648], [870, 654], [900, 654], [925, 651], [950, 643], [970, 632], [990, 622], [1010, 608], [1035, 592], [1055, 582], [1070, 576], [1085, 575], [1105, 578], [1130, 587], [1160, 600], [1190, 611], [1225, 614], [1293, 612]]
        };
        for (const id in lines) document.getElementById(id).setAttribute('d', curve(lines[id]));

        const times = ['15 Jan 2019', '16 Jan 04:00', '16 Jan 20:00', '17 Jan 12:00', '18 Jan 04:00', '18 Jan 20:00', '21 Jan 12:00', '22 Jan 04:00', '22 Jan 20:00', '23 Jan 12:00', '24 Jan 04:00', '24 Jan 20:00', '25 Jan 12:00', '28 Jan 04:00', '28 Jan 20:00', '29 Jan 12:00', '30 Jan 04:00', '30 Jan 20:00', '31 Jan 12:00', '1 Feb 04:00', '1 Feb 20:00'];
        document.getElementById('timeAxis').innerHTML = times.map(t => `<li><div class="w-px h-[2px] ml-px bg-white"></div>${t}</li>`).join('');

        const tabs = ['GBPUSD,H4', 'EURUSD,H4', 'USDJPY,H4', 'USDCAD,H4', 'AUDUSD,H4', 'GBPJPY,H4', 'NZDJPY,H4', 'EURNZD,H4', 'EURCAD,H4', 'NZDUSD,H4', 'AUDCHF,H4', 'USDNOK,H4', 'USDSEK,H4', 'USDCHF,H1'];
        document.getElementById('chartTabs').innerHTML = tabs.map(t => `<a href="#" class="pl-[11px] pr-[10px] h-[14px] leading-[14px] border-r border-[#777]">${t}</a>`).join('');
    </script>
</body>
</html>
